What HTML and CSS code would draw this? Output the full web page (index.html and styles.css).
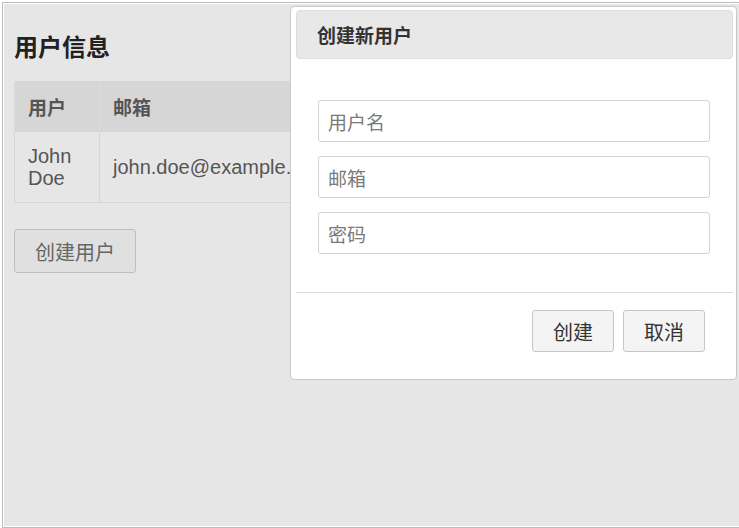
FILE: index.html
```html
<!DOCTYPE html>
<html lang="zh">
<head>
<meta charset="utf-8">
<title>用户信息</title>
<link rel="stylesheet" href="styles.css">
</head>
<body>
<div class="frame">
  <div class="page">
    <h2 class="title">用户信息</h2>
    <table class="users">
      <thead>
        <tr><th class="col-user">用户</th><th>邮箱</th></tr>
      </thead>
      <tbody>
        <tr><td class="col-user">John Doe</td><td>john.doe@example.com</td></tr>
      </tbody>
    </table>
    <button class="btn-create">创建用户</button>

    <div class="dialog">
      <div class="dialog-header">创建新用户</div>
      <div class="dialog-body">
        <input class="field" type="text" placeholder="用户名">
        <input class="field" type="email" placeholder="邮箱">
        <input class="field" type="password" placeholder="密码">
      </div>
      <div class="dialog-footer">
        <button class="btn">创建</button>
        <button class="btn">取消</button>
      </div>
    </div>
  </div>
</div>
</body>
</html>
```
FILE: styles.css
```css
html, body {
  margin: 0;
  padding: 0;
  background: #ffffff;
  overflow: hidden;
}
body {
  font-family: "Liberation Sans", Arial, "Noto Sans CJK SC", sans-serif;
}
.frame {
  margin: 2px 0 0 2px;
  border: 1px solid #bcbcbc;
  border-right: none;
  padding: 1px 0 1px 1px;
  height: 522px;
}
.page {
  position: relative;
  height: 522px;
  background: #e6e6e6;
  padding: 27px 0 0 10px;
  box-sizing: border-box;
}
.title {
  margin: 0;
  font-size: 24px;
  line-height: 30px;
  font-weight: bold;
  color: #222;
  font-family: "Noto Sans CJK SC", sans-serif;
}
.users {
  margin-top: 20px;
  border-collapse: collapse;
  width: 712px;
  font-size: 20px;
  color: #555;
}
.users th {
  background: #d6d6d6;
  text-align: left;
  font-weight: bold;
  font-family: "Noto Sans CJK SC", sans-serif;
  font-size: 19px;
  line-height: 23px;
  padding: 14px 14px 14px 13px;
  border-left: 1px solid #dcdcdc;
  border-right: 1px solid #dcdcdc;
}
.users td {
  padding: 13px 14px 13px 13px;
  line-height: 22px;
  border: 1px solid #d6d6d6;
  border-top: none;
  white-space: nowrap;
}
.users td.col-user {
  white-space: normal;
}
.users .col-user {
  width: 57px;
}
.btn-create {
  display: block;
  margin-top: 26px;
  height: 44px;
  width: 122px;
  padding: 0;
  background: #e0e0e0;
  border: 1px solid #bdbdbd;
  border-radius: 3px;
  font-family: "Noto Sans CJK SC", sans-serif;
  font-size: 20px;
  color: #666;
}
.dialog {
  position: absolute;
  left: 286px;
  top: 2px;
  width: 447px;
  height: 374px;
  box-sizing: border-box;
  background: #fff;
  border: 1px solid #c8c8c8;
  border-radius: 4px;
  padding: 3px 3px 0 5px;
}
.dialog-header {
  height: 47px;
  border: 1px solid #dedede;
  border-radius: 4px;
  background: #e8e8e8;
  padding-left: 20px;
  display: flex;
  align-items: center;
  font-family: "Noto Sans CJK SC", sans-serif;
  font-weight: bold;
  font-size: 19px;
  color: #333;
}
.dialog-body {
  display: flex;
  flex-direction: column;
  gap: 14px;
  padding: 41px 23px 38px 22px;
}
.field {
  height: 42px;
  box-sizing: border-box;
  border: 1px solid #d2d2d2;
  border-radius: 3px;
  padding: 0 9px;
  font-family: "Noto Sans CJK SC", sans-serif;
  font-size: 19px;
  color: #333;
  background: #fff;
  outline: none;
}
.field::placeholder {
  color: #7a7a7a;
}
.dialog-footer {
  border-top: 1px solid #dadada;
  display: flex;
  justify-content: flex-end;
  gap: 9px;
  padding: 17px 28px 0 0;
}
.btn {
  height: 42px;
  width: 82px;
  background: #f4f4f4;
  border: 1px solid #c6c6c6;
  border-radius: 3px;
  font-family: "Noto Sans CJK SC", sans-serif;
  font-size: 20px;
  color: #333;
  padding: 0;
}
```
